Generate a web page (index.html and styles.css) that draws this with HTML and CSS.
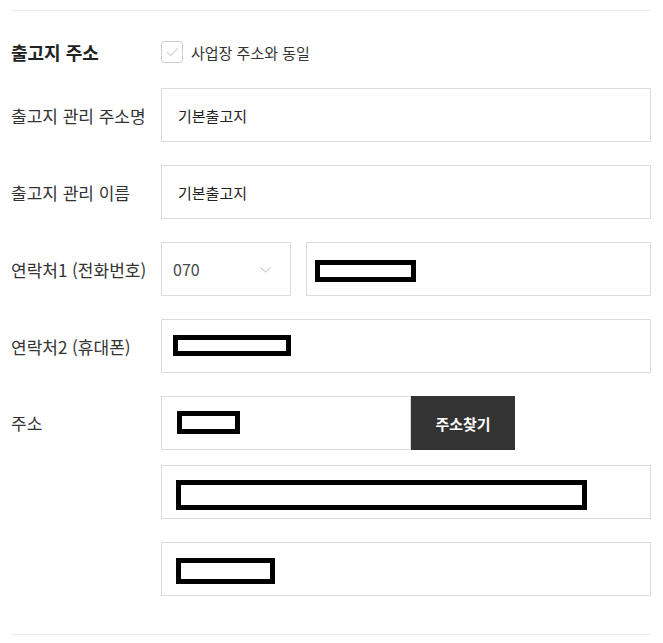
FILE: index.html
```html
<!DOCTYPE html>
<html lang="ko">
<head>
<meta charset="utf-8">
<title>출고지 주소</title>
<link rel="stylesheet" href="styles.css">
</head>
<body>
<section class="panel">
  <div class="head">
    <h2 class="title">출고지 주소</h2>
    <label class="check">
      <span class="box">
        <svg width="13" height="10" viewBox="0 0 13 10"><path d="M1 5 L4.8 8.6 L12 1.2" fill="none" stroke="#d4d4d4" stroke-width="1.2"/></svg>
      </span>
      <span class="check-text">사업장 주소와 동일</span>
    </label>
  </div>

  <div class="rows">
    <div class="row">
      <div class="label">출고지 관리 주소명</div>
      <div class="field"><div class="input"><span class="val">기본출고지</span></div></div>
    </div>
    <div class="row">
      <div class="label">출고지 관리 이름</div>
      <div class="field"><div class="input"><span class="val">기본출고지</span></div></div>
    </div>
    <div class="row">
      <div class="label">연락처1 (전화번호)</div>
      <div class="field phone">
        <div class="input select"><span class="num">070</span>
          <svg class="chev" width="11" height="6" viewBox="0 0 11 6"><path d="M0.5 0.5 L5.5 5 L10.5 0.5" fill="none" stroke="#bdbdbd" stroke-width="1"/></svg>
        </div>
        <div class="input grow"><span class="redact r-phone"></span></div>
      </div>
    </div>
    <div class="row">
      <div class="label">연락처2 (휴대폰)</div>
      <div class="field"><div class="input"><span class="redact r-mobile"></span></div></div>
    </div>
    <div class="row top">
      <div class="label addr-label">주소</div>
      <div class="field stack">
        <div class="zip">
          <div class="input zip-input"><span class="redact r-zip"></span></div>
          <button class="btn">주소찾기</button>
        </div>
        <div class="input"><span class="redact r-addr1"></span></div>
        <div class="input gap"><span class="redact r-addr2"></span></div>
      </div>
    </div>
  </div>
</section>
</body>
</html>
```

FILE: styles.css
```css
* { box-sizing: border-box; }
html, body { margin: 0; padding: 0; background: #fff; }
body {
  font-family: "Noto Sans CJK KR", "Noto Sans", sans-serif;
  color: #333;
}
.panel {
  width: 640px;
  margin-left: 11px;
  margin-top: 10px;
  border-top: 1px solid #ececec;
  border-bottom: 1px solid #ececec;
  padding: 30px 0 38px;
}
.head {
  display: flex;
  align-items: center;
  height: 22px;
}
.title {
  width: 150px;
  margin: 0;
  font-size: 18px;
  font-weight: 700;
  color: #222;
}
.check {
  display: flex;
  align-items: center;
  gap: 8px;
  font-size: 15px;
  color: #333;
}
.box {
  width: 22px;
  height: 22px;
  border: 1px solid #cfcfcf;
  border-radius: 3px;
  display: flex;
  align-items: center;
  justify-content: center;
}
.rows {
  margin-top: 25px;
  display: flex;
  flex-direction: column;
  gap: 23px;
}
.row {
  display: flex;
  align-items: center;
}
.row.top { align-items: flex-start; }
.label {
  width: 150px;
  flex: none;
  font-size: 17px;
  color: #333;
}
.addr-label { line-height: 54px; }
.field { flex: 1; display: flex; }
.input {
  height: 54px;
  border: 1px solid #dcdcdc;
  display: flex;
  align-items: center;
  padding-left: 16px;
  flex: 1;
  background: #fff;
}
.val { font-size: 15px; color: #222; }
.phone { gap: 15px; }
.select {
  flex: none;
  width: 130px;
  padding: 0 19px 0 11px;
  justify-content: space-between;
}
.num { font-size: 16px; color: #4a4a4a; }
.chev { margin-top: 1px; }
.grow { flex: 1; padding-left: 8px; }
.stack { flex-direction: column; gap: 15px; }
.stack > .input { flex: none; padding-left: 14px; }
.stack .gap { margin-top: 8px; }
.zip { display: flex; }
.zip-input { flex: none; width: 250px; padding-left: 15px; }
.btn {
  width: 104px;
  height: 54px;
  border: 0;
  background: #333;
  color: #fff;
  font-family: inherit;
  font-size: 15px;
  font-weight: 700;
  padding: 0;
}
.redact {
  display: block;
  border: 5px solid #000;
  background: #fff;
}
.r-phone { width: 101px; height: 22px; margin-top: 3px; }
.r-mobile { width: 118px; height: 21px; margin-left: -5px; margin-top: -2px; }
.r-zip { width: 63px; height: 23px; margin-top: -2px; }
.r-addr1 { width: 411px; height: 30px; margin-top: 6px; }
.r-addr2 { width: 99px; height: 26px; margin-top: 3px; }
```
